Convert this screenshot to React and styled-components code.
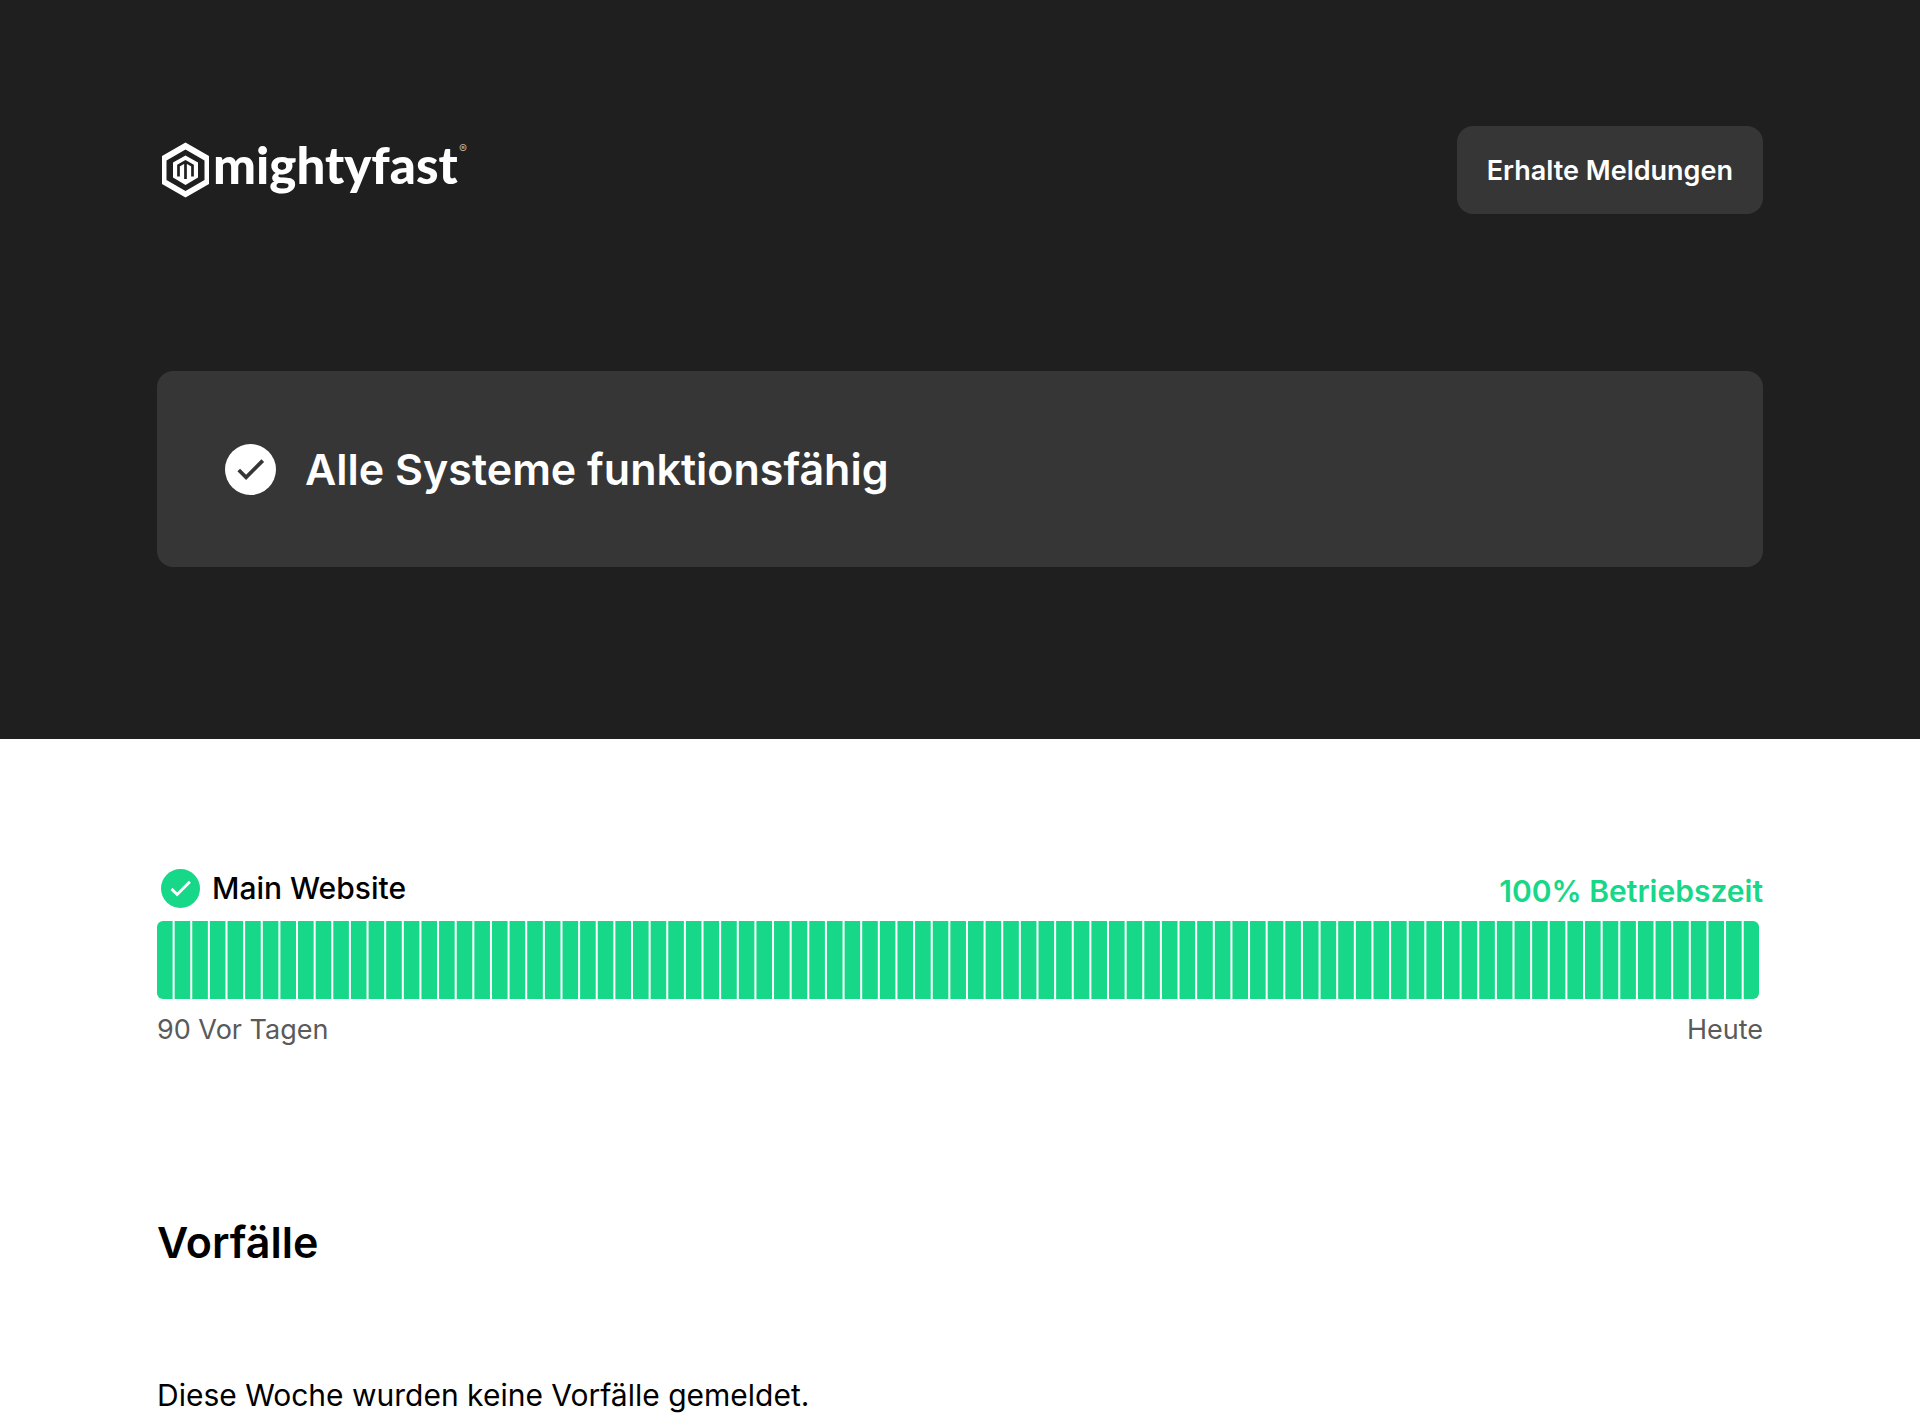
import React from 'react';
import styled, { createGlobalStyle } from 'styled-components';

const GlobalStyle = createGlobalStyle`
  * { box-sizing: border-box; }
  body {
    margin: 0;
    background: #fff;
    color: #000;
    font-family: Inter, "Liberation Sans", sans-serif;
  }
`;

const Container = styled.div`
  max-width: 1734px;
  margin: 0 auto;
  padding: 0 64px;
`;

const Header = styled.header`
  background: #1f1f1f;
  color: #fff;
  padding: 126px 0 172px;
`;

const TopBar = styled.div`
  display: flex;
  align-items: center;
  justify-content: space-between;
  margin-bottom: 157px;
`;

const LogoLink = styled.a`
  display: block;
  padding-left: 5px;
  color: #fff;

  svg { display: block; }
`;

const Button = styled.button`
  height: 88px;
  padding: 2px 30px 0;
  border: 0;
  border-radius: 16px;
  background: #363636;
  color: #fff;
  font: 600 27px/32px Inter, "Liberation Sans", sans-serif;
  cursor: pointer;
`;

const StatusCard = styled.section`
  display: flex;
  align-items: center;
  gap: 29px;
  min-height: 196px;
  padding: 0 68px;
  border-radius: 16px;
  background: #363636;
`;

const Title = styled.h1`
  margin: 0;
  font-size: 43px;
  font-weight: 600;
  line-height: 56px;
`;

const Row = styled.div`
  display: flex;
  align-items: flex-end;
  justify-content: space-between;
`;

const Service = styled.section`
  padding-top: 127px;
`;

const ServiceName = styled.h2`
  display: flex;
  align-items: center;
  gap: 12px;
  margin: 0;
  padding-left: 4px;
  font-size: 30px;
  font-weight: 500;
  line-height: 44px;
`;

const Uptime = styled.span`
  color: #17d788;
  font-size: 30px;
  font-weight: 600;
  line-height: 38px;
`;

const Bars = styled.svg`
  display: block;
  width: calc(100% - 4px);
  height: 78px;
  margin: 11px 0 13px;
  border-radius: 6px;
  fill: #17d788;
`;

const Legend = styled.span`
  color: #5a5a5a;
  font-size: 27px;
  line-height: 36px;
`;

const Incidents = styled.section`
  padding: 166px 0 0;
`;

const SectionTitle = styled.h2`
  margin: 0 0 103px;
  font-size: 43px;
  font-weight: 600;
  line-height: 56px;
`;

const Message = styled.p`
  margin: 0;
  font-size: 30px;
  line-height: 44px;
`;

const DAYS = 91;

const CheckIcon = ({ size, fill, mark }) => (
  <svg width={size} height={size} viewBox="0 0 52 52" aria-hidden="true">
    <circle cx="26" cy="26" r="26" fill={fill} />
    <path d="M14 26.5 L21.5 34 L38.5 17" fill="none" stroke={mark} strokeWidth="3.8" />
  </svg>
);

const Logo = () => (
  <svg width="310" height="80" viewBox="0 0 310 80" role="img" aria-label="mightyfast">
    <path
      fill="#fff"
      fillRule="evenodd"
      d="M23.5 12.5 L47 26 V54 L23.5 67.500 L0 54 V26 Z M23.5 19.500 L4.500 30.500 V50 L23.5 61 L42.500 50 V30.500 Z"
    />
    <path fill="#fff" d="M23.5 25.500 L36 32.500 V47.500 L23.5 55 L11 47.500 V32.500 Z" />
    <path
      fill="none"
      stroke="#1f1f1f"
      strokeWidth="2.7"
      d="M16.500 46.500 V35.500 L23.5 31.500 L30.500 35.500 V46.500 M23.5 31.500 V49"
    />
    <text x="51" y="54" fill="#fff" fontFamily="Lato, sans-serif" fontWeight="900" fontSize="51">mightyfast</text>
    <text x="297" y="23" fill="#b5b5b5" fontFamily="Inter, sans-serif" fontSize="12">®</text>
  </svg>
);

const App = () => {
  return (
    <>
      <GlobalStyle />
      <Header>
        <Container>
          <TopBar>
            <LogoLink href="#"><Logo /></LogoLink>
            <Button type="button">Erhalte Meldungen</Button>
          </TopBar>
          <StatusCard>
            <CheckIcon size={51} fill="#fff" mark="#363636" />
            <Title>Alle Systeme funktionsfähig</Title>
          </StatusCard>
        </Container>
      </Header>
      <main>
        <Container>
          <Service>
            <Row>
              <ServiceName>
                <CheckIcon size={39} fill="#17d788" mark="#fff" />
                Main Website
              </ServiceName>
              <Uptime>100% Betriebszeit</Uptime>
            </Row>
            <Bars viewBox="0 0 1602 78" preserveAspectRatio="none" aria-hidden="true">
              {Array.from({ length: DAYS }, (_, day) => (
                <rect key={day} x={day * 17.63} width="15.6" height="78" />
              ))}
            </Bars>
            <Row>
              <Legend>90 Vor Tagen</Legend>
              <Legend>Heute</Legend>
            </Row>
          </Service>
          <Incidents>
            <SectionTitle>Vorfälle</SectionTitle>
            <Message>Diese Woche wurden keine Vorfälle gemeldet.</Message>
          </Incidents>
        </Container>
      </main>
    </>
  );
};

export default App;
